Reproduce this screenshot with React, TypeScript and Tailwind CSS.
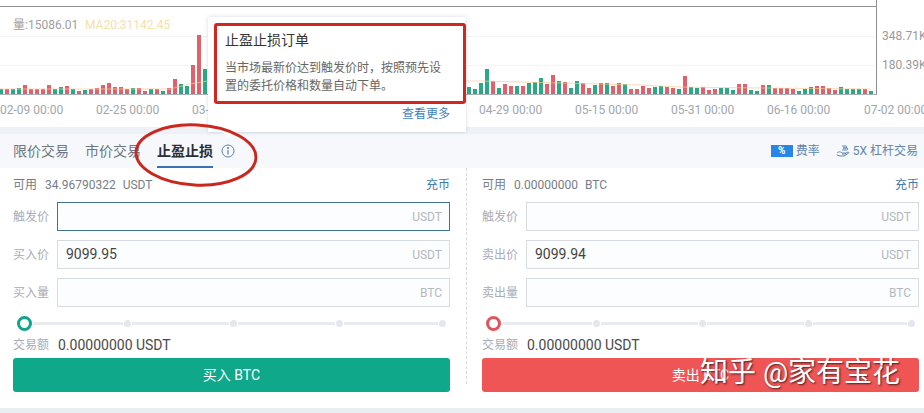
import React from "react";

const FONT = "font-['Roboto','Noto_Sans_CJK_SC',sans-serif]";

type Bar = [string, number];
const parse = (s: string): Bar[] =>
  s.split(" ").map((t) => [t[0], Number(t.slice(1))] as Bar);

const leftBars = parse(
  "g5 r5 g5 g6 r9 r5 r5 r5 r9 g5 g7 r8 g5 r3 g4 r5 r6 r9 r11 r7 r7 r5 g6 r6 r3 g5 r5 g3 r6 r15 g10 g8 r29 r59 g25"
);
const rightBars = parse(
  "g7 g5 g11 g25 r13 g6 r10 r8 g8 r8 g11 g12 g16 r10 r19 g13 r12 g6 g13 r11 r6 g9 r11 g11 r8 r11 g10 r5 r5 r8 r6 g7 g8 r7 r6 g5 r18 g7 g6 r7 r4 r5 g6 g6 g4 r10 r10 g4 g3 r9 g9 r6 r6 r6 r5 g3 g5 g7 r8 r8 r6 r4 g7 g5 g5 g5 r5 g3"
);

const dates: [number, string][] = [
  [0, "02-09 00:00"],
  [96, "02-25 00:00"],
  [192, "03-12 00:00"],
  [479, "04-29 00:00"],
  [575, "05-15 00:00"],
  [671, "05-31 00:00"],
  [767, "06-16 00:00"],
  [864, "07-02 00:00"],
];

function Chart() {
  const base = 94;
  const color = (c: string) => (c === "g" ? "#2aa985" : "#e2606a");
  return (
    <svg width="924" height="127" className="block" style={{ fontFamily: "Roboto, 'Noto Sans CJK SC', sans-serif" }}>
      <line x1="0" y1="6.5" x2="876" y2="6.5" stroke="#8f8f8f" />
      <line x1="876.5" y1="0" x2="876.5" y2="95" stroke="#8f8f8f" />
      <line x1="0" y1="36.5" x2="876" y2="36.5" stroke="#f3f4f6" />
      <line x1="0" y1="65.5" x2="876" y2="65.5" stroke="#f3f4f6" />
      {leftBars.map(([c, h], i) => (
        <rect key={"l" + i} x={-1 + i * 6} y={base - h} width="4" height={h} fill={color(c)} />
      ))}
      {rightBars.map(([c, h], i) => (
        <rect key={"r" + i} x={467 + i * 6} y={base - h} width="4" height={h} fill={color(c)} />
      ))}
      <polyline
        points="0,89 170,89 190,84 208,81 480,81 560,83 640,85 680,87 760,88 870,89"
        fill="none"
        stroke="#f5c99a"
        strokeWidth="1"
        opacity="0.7"
      />
      <line x1="0" y1="94.5" x2="876" y2="94.5" stroke="#a8b0b8" />
      <text x="13" y="29" fontSize="12" fill="#a0a0a0">量:15086.01</text>
      <text x="85" y="29" fontSize="12" fill="#f5e0ab">MA20:31142.45</text>
      <text x="882" y="40" fontSize="12" fill="#9a9a9a">348.71K</text>
      <text x="882" y="69" fontSize="12" fill="#9a9a9a">180.39K</text>
      {dates.map(([x, t]) => (
        <text key={t} x={x} y="114" fontSize="12" fill="#a0a6ae">{t}</text>
      ))}
    </svg>
  );
}

function Field({
  label,
  value,
  unit,
  focused,
}: {
  label: string;
  value?: string;
  unit: string;
  focused?: boolean;
}) {
  return (
    <div className="flex items-center h-[29px]">
      <span className="w-[44px] shrink-0 text-[12px] text-[#a9adb5]">{label}</span>
      <div
        className={
          focused
            ? "flex-1 h-full flex items-center justify-between pl-2 pr-[7px] border border-[#3f7396] bg-[#fcfdfe]"
            : "flex-1 h-full flex items-center justify-between pl-2 pr-[7px] border border-[#d7dbe2] bg-[#fcfdfe]"
        }
      >
        <span className="text-[14px] text-[#444]">{value}</span>
        <span className="text-[12px] text-[#b4b8bf]">{unit}</span>
      </div>
    </div>
  );
}

function Dot() {
  return <span className="w-[7px] h-[7px] rounded-full bg-[#e3e7ef] shrink-0" />;
}

function Slider({ ring }: { ring: string }) {
  return (
    <div className="flex items-center h-[16px] pl-[4px]">
      <span className={"w-[15px] h-[15px] rounded-full border-[3px] bg-white shrink-0 " + ring} />
      <span className="w-[90px] h-[3px] bg-[#e8ebf2] mx-[1px]" />
      <Dot />
      <span className="w-[97px] h-[3px] bg-[#e8ebf2] mx-[1px]" />
      <Dot />
      <span className="w-[97px] h-[3px] bg-[#e8ebf2] mx-[1px]" />
      <Dot />
      <span className="w-[94px] h-[3px] bg-[#e8ebf2] mx-[1px]" />
      <Dot />
    </div>
  );
}

function Panel({
  avail,
  coin,
  a,
  b,
  price,
  unit2,
  ring,
  btn,
  btnText,
  focused,
}: {
  avail: string;
  coin: string;
  a: string;
  b: string;
  price: string;
  unit2: string;
  ring: string;
  btn: string;
  btnText: string;
  focused?: boolean;
}) {
  return (
    <div className="w-[437px] flex flex-col">
      <div className="flex items-center justify-between h-[34px] text-[12px] text-[#777d86]">
        <span className="flex gap-[7px]">
          <span className="mr-[1px]">可用</span>
          <span>{avail}</span>
          <span>{coin}</span>
        </span>
        <span className="text-[#3f78ad]">充币</span>
      </div>
      <div className="flex flex-col gap-[9px]">
        <Field label="触发价" unit="USDT" focused={focused} />
        <Field label={a} value={price} unit="USDT" />
        <Field label={b} unit={unit2} />
      </div>
      <div className="mt-[8px]">
        <Slider ring={ring} />
      </div>
      <div className="flex items-center h-[20px] mt-[4px]">
        <span className="w-[45px] text-[12px] text-[#a9adb5]">交易额</span>
        <span className="text-[14px] text-[#4a4a4a]">0.00000000 USDT</span>
      </div>
      <button className={"mt-[3px] h-[34px] rounded-[3px] text-white text-[14px] " + btn}>{btnText}</button>
    </div>
  );
}

export default function App() {
  return (
    <div className={"relative w-[924px] h-[413px] overflow-hidden bg-white " + FONT}>
      <Chart />
      <div className="h-[7px] bg-[#eef1f7]" />

      <div className="h-[34px] flex items-center justify-between pl-[13px] pr-[6px] bg-[#f6f8fb]">
        <div className="flex items-center h-full gap-4 text-[14px] text-[#6f7680]">
          <span>限价交易</span>
          <span>市价交易</span>
          <span className="h-full flex items-center font-bold text-[#2b2f36] border-b-2 border-[#3b73af] pt-[2px]">止盈止损</span>
          <svg width="14" height="14" viewBox="0 0 14 14" className="-ml-[8px]" fill="none" stroke="#5c7fa6">
            <circle cx="7" cy="7" r="6" />
            <line x1="7" y1="6" x2="7" y2="10.5" strokeWidth="1.2" />
            <circle cx="7" cy="4" r="0.6" fill="#5c7fa6" />
          </svg>
        </div>
        <div className="flex items-center text-[12px] text-[#5f86ad]">
          <span className="w-[22px] h-[12px] bg-[#2a85e8] text-white text-[10px] leading-[12px] text-center font-bold">%</span>
          <span className="ml-[3px]">费率</span>
          <svg width="14" height="14" viewBox="0 0 14 14" className="ml-[16px]" fill="none" stroke="#5f86ad" strokeWidth="1">
            <path d="M1 9c2-2 4-1 5 0h3c1 0 1 1 0 1H6M9 9.500l3-1.500c1 0 1 1 0 1.500L8 12H4L1 11" />
            <path d="M6 2h4c1 0 1 2 0 2H7M7 4h4c1 0 1 2 0 2H6" />
          </svg>
          <span className="ml-[3px]">5X 杠杆交易</span>
        </div>
      </div>

      <div className="h-[240px] flex pl-[13px] pr-[5px] justify-between">
        <Panel
          avail="34.96790322"
          coin="USDT"
          a="买入价"
          b="买入量"
          price="9099.95"
          unit2="BTC"
          ring="border-[#10a58a]"
          btn="bg-[#0fa88a]"
          btnText="买入 BTC"
          focused
        />
        <div className="h-[216px] border-l border-dashed border-[#d5d8de]" />
        <Panel
          avail="0.00000000"
          coin="BTC"
          a="卖出价"
          b="卖出量"
          price="9099.94"
          unit2="BTC"
          ring="border-[#e0555c]"
          btn="bg-[#f05555]"
          btnText="卖出 BTC"
        />
      </div>
      <div className="h-[5px] bg-[#e9eef5]" />

      {/* Tooltip over the chart */}
      <div className="absolute left-[208px] top-[17px] w-[258px] h-[115px] bg-white shadow-[0_0_4px_rgba(90,110,140,0.25)] pl-[17px] pr-[16px] pt-[14px]">
        <div className="text-[14px] leading-[18px] text-[#333]">止盈止损订单</div>
        <p className="mt-[10px] text-[12px] leading-[18px] text-[#666]">
          当市场最新价达到触发价时，按照预先设置的委托价格和数量自动下单。
        </p>
        <div className="absolute right-[16px] top-[88px] text-[12px] text-[#3f7fbd]">查看更多</div>
        <div className="absolute left-[16px] -bottom-[4px] w-[8px] h-[8px] rotate-45 bg-white" />
      </div>

      {/* Red annotations */}
      <div className="absolute left-[214px] top-[23px] w-[252px] h-[81px] border-[3px] border-[#d0281f] rounded-[3px]" />
      <svg className="absolute left-[130px] top-[120px]" width="135" height="72" fill="none">
        <ellipse cx="66" cy="35" rx="60" ry="30" stroke="#c9281f" strokeWidth="3" transform="rotate(3 66 35)" />
      </svg>

      {/* Watermark */}
      <div className="absolute left-[700px] top-[354px] text-[28px] leading-[38px] text-white whitespace-nowrap [text-shadow:1px_1px_2px_rgba(40,20,20,0.85)]">
        知乎 @家有宝花
      </div>
    </div>
  );
}
